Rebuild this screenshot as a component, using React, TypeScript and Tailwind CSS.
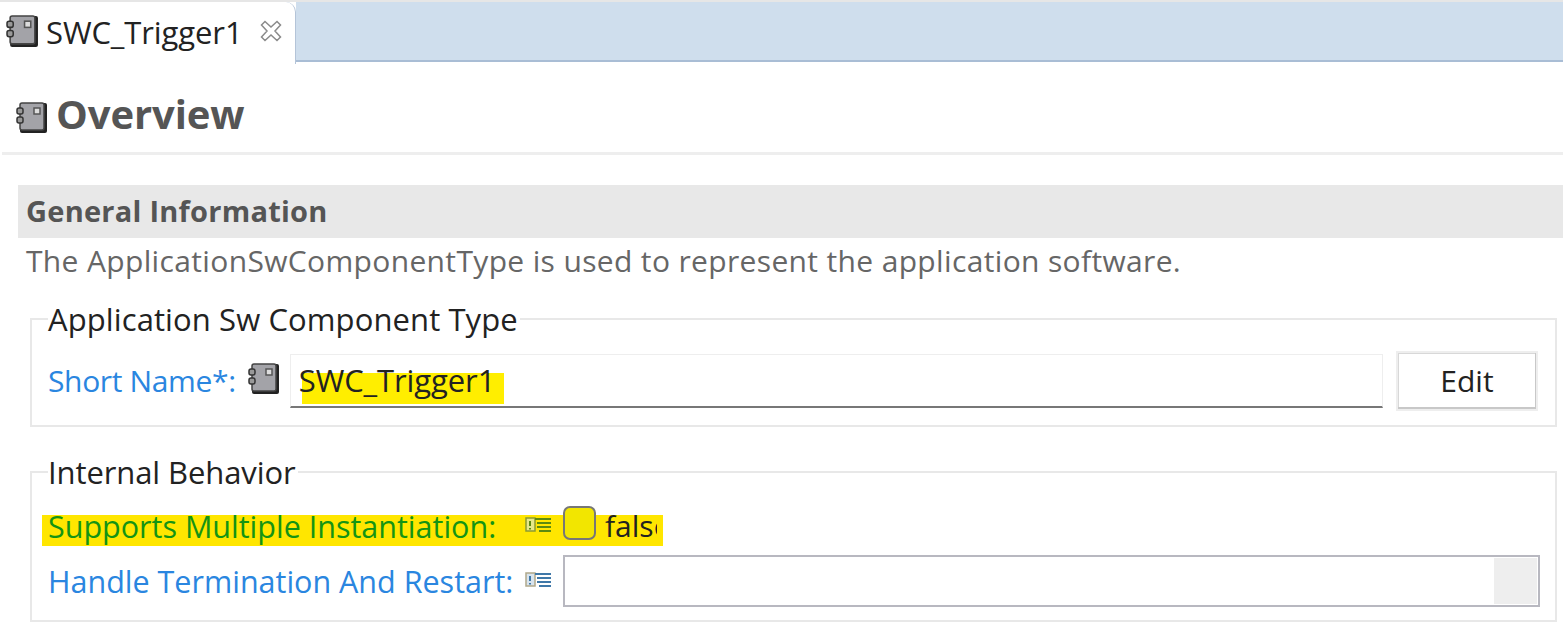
const FONT = "font-['Open_Sans','Noto_Sans',sans-serif]";

function ComponentIcon({ className }: { className: string }) {
  return (
    <svg viewBox="0 0 32 32" className={className}>
      <rect x="4" y="1" width="27" height="30" rx="2" fill="#222" />
      <rect x="4" y="1" width="24" height="27" rx="2" fill="#a3a3a8" stroke="#444" strokeWidth="1.5" />
      <rect x="1" y="6" width="6" height="6" rx="2" fill="#999" stroke="#333" strokeWidth="1.5" />
      <rect x="1" y="15" width="6" height="6" rx="2" fill="#999" stroke="#333" strokeWidth="1.5" />
      <rect x="18" y="6" width="6" height="6" fill="#ddd" stroke="#555" strokeWidth="1.5" />
    </svg>
  );
}

function ListIcon({ tone }: { tone: "green" | "blue" }) {
  const lines = tone === "green" ? "#5c8a10" : "#3f78a8";
  return (
    <svg viewBox="0 0 28 20" className="w-[28px] h-[20px] shrink-0">
      <rect x="1" y="2" width="9" height="13" fill={tone === "green" ? "#e6e88a" : "#d8e4ee"} stroke={tone === "green" ? "#8c9a30" : "#b0a88a"} strokeWidth="1.5" />
      <path d="M5 5v5M5 12v1.5" stroke={lines} strokeWidth="2" />
      <path d="M10 3h16M12 7h14M12 11h14M14 15h12" stroke={lines} strokeWidth="2" />
    </svg>
  );
}

function CloseIcon() {
  return (
    <svg viewBox="0 0 22 22" className="w-[22px] h-[22px]" fill="none" stroke="#8a8a8a" strokeWidth="1.5">
      <path d="M5 1.5 11 7l6-5.5L20.500 5 15 11l5.500 6-3.500 3.500L11 15l-6 5.500L1.500 17 7 11 1.500 5z" />
    </svg>
  );
}

export default function App() {
  return (
    <div className={`w-[1563px] h-[625px] overflow-hidden bg-white ${FONT}`}>
      {/* Editor tab strip */}
      <div className="flex h-[64px] border-t-2 border-[#e6e6e6]">
        <div className="flex items-center w-[296px] h-[62px] pl-[6px] pb-[4px] bg-white rounded-tr-[10px] border-r border-[#b4c4d8]">
          <ComponentIcon className="w-[33px] h-[33px] shrink-0" />
          <span className="ml-[7px] mt-[2px] text-[31px] leading-none tracking-[-0.1px] text-[#222]">SWC_Trigger1</span>
          <span className="ml-[17px]"><CloseIcon /></span>
        </div>
        <div className="flex-1 h-[60px] bg-[#cfdeed] border-b-2 border-[#a9bdd5]" />
      </div>

      {/* Page heading */}
      <div className="flex items-center h-[91px] ml-[2px] pl-[14px] pt-[12px] border-b-[3px] border-[#eeeeee]">
        <ComponentIcon className="w-[32px] h-[32px] mt-[8px] shrink-0" />
        <h1 className="ml-[8px] text-[40px] leading-none font-bold text-[#555555] tracking-[-0.1px]">Overview</h1>
      </div>

      {/* General Information section */}
      <div className="ml-[18px] mt-[30px]">
        <div className="flex items-center h-[53px] pl-[8px] pb-[2px] bg-[#e8e8e8]">
          <h2 className="text-[29px] leading-none font-bold text-[#555555] tracking-[0.25px]">General Information</h2>
        </div>
        <p className="ml-[8px] mt-[3px] text-[30px] leading-[40px] text-[#666666] tracking-[0.35px] whitespace-nowrap">
          The ApplicationSwComponentType is used to represent the application software.
        </p>

        <fieldset className="ml-[12px] mr-[6px] mt-[20px] h-[126px] border-2 border-[#e8e8e8] px-[16px]">
          <legend className="text-[31px] leading-[36px] text-[#222] tracking-[0.1px] pr-[2px]">Application Sw Component Type</legend>
          <div className="flex items-center h-[54px] mt-[17px]">
            <span className="text-[30px] leading-none text-[#2a86e0] tracking-[-0.35px]">Short Name*:</span>
            <ComponentIcon className="w-[32px] h-[32px] ml-[12px] mb-[4px] shrink-0" />
            <div className="relative flex-1 h-[54px] ml-[10px] border border-[#eeeeee] border-b-2 border-b-[#777777] flex items-center pl-[8px]">
              <span className="absolute left-[11px] top-[18px] w-[202px] h-[31px] bg-[#ffee00]" />
              <span className="relative text-[31px] leading-none text-[#222] tracking-[-0.1px]">SWC_Trigger1</span>
            </div>
            <button className="w-[142px] h-[60px] ml-[13px] mr-[1px] bg-white border-2 border-[#eeeeee] shadow-[inset_-1px_-2px_0_#c8c8c8,inset_1px_1px_0_#d8d8d8] text-[30px] leading-none text-[#222]">Edit</button>
          </div>
        </fieldset>

        <fieldset className="ml-[12px] mr-[6px] mt-[27px] h-[168px] border-2 border-[#e8e8e8] px-[16px]">
          <legend className="text-[31px] leading-[36px] text-[#222] tracking-[-0.1px] pr-[2px]">Internal Behavior</legend>
          <div className="relative flex items-center h-[44px] mt-[14px]">
            <span className="absolute left-[-6px] top-[11px] w-[621px] h-[31px] bg-[#ffe600]" />
            <span className="relative w-[477px] text-[30.5px] leading-none text-[#149414] whitespace-nowrap">Supports Multiple Instantiation:</span>
            <span className="relative"><ListIcon tone="green" /></span>
            <span className="relative w-[33px] h-[34px] ml-[10px] mb-[6px] rounded-[7px] border-2 border-[#777777] bg-[#f2e600]" />
            <span className="relative w-[52px] ml-[9px] overflow-hidden text-[30px] leading-none text-[#222]">false</span>
          </div>
          <div className="flex items-center h-[52px] mt-[7px]">
            <span className="w-[477px] text-[30.5px] leading-none text-[#2a86e0] whitespace-nowrap">Handle Termination And Restart:</span>
            <ListIcon tone="blue" />
            <div className="flex flex-1 justify-end h-[52px] ml-[10px] mr-[-1px] border-2 border-[#b8b8c0] p-[1px]">
              <div className="w-[43px] bg-[#eeeeee]" />
            </div>
          </div>
        </fieldset>
      </div>
    </div>
  );
}
